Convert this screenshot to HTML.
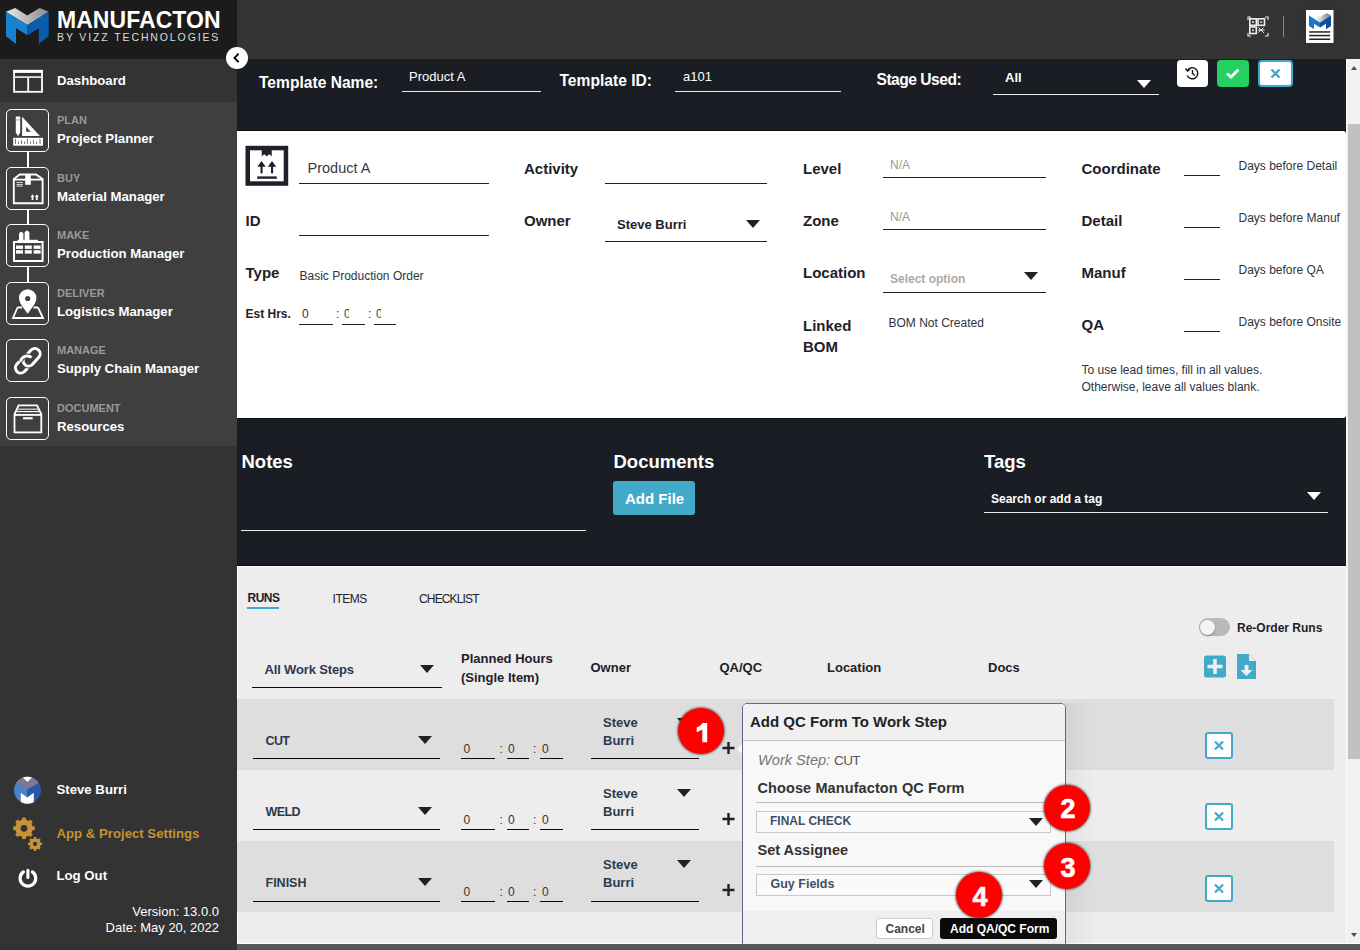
<!DOCTYPE html>
<html><head><meta charset="utf-8">
<style>
*{box-sizing:border-box;margin:0;padding:0}
html,body{width:1360px;height:950px;overflow:hidden;background:#ededed;font-family:"Liberation Sans",sans-serif}
.a{position:absolute}
.t{position:absolute;line-height:1;white-space:nowrap;top:calc(var(--b)*1px - 0.8465em)}
.b{font-weight:bold}
.ul{position:absolute;height:1px;background:#1e2129}
.tri{position:absolute;width:0;height:0;border-left:7px solid transparent;border-right:7px solid transparent;border-top:8px solid #1e2129}
</style></head><body>
<!-- backgrounds -->
<div class="a" style="left:0;top:0;width:237px;height:59px;background:#1b1b1b"></div>
<div class="a" style="left:237px;top:0;width:1123px;height:59px;background:#343434"></div>
<div class="a" style="left:0;top:59px;width:237px;height:43px;background:#333"></div>
<div class="a" style="left:0;top:102px;width:237px;height:344px;background:#3f3f3f"></div>
<div class="a" style="left:0;top:446px;width:237px;height:504px;background:#333"></div>
<div class="a" style="left:237px;top:59px;width:1109px;height:507px;background:#1b1d24"></div>
<div class="a" style="left:237px;top:130px;width:1109px;height:1px;background:#080b12"></div>
<div class="a" style="left:237px;top:418px;width:1109px;height:1px;background:#080b12"></div>
<div class="a" style="left:237px;top:565px;width:1109px;height:1px;background:#080b12"></div>
<div class="a" style="left:237px;top:131px;width:1109px;height:287px;background:#fff;border-radius:0 3px 3px 0"></div>
<div class="a" style="left:237px;top:566px;width:1109px;height:378px;background:#ededed;border-top:1px solid #fff;border-left:1px solid #fff;border-radius:0 3px 0 0"></div>
<!-- scrollbar -->
<div class="a" style="left:1346px;top:59px;width:14px;height:885px;background:#f1f1f1;border-left:1px solid #fafafa"></div>
<div class="a" style="left:1348px;top:124px;width:12px;height:635px;background:#c1c1c1"></div>
<div class="a" style="left:237px;top:943px;width:1123px;height:1px;background:#fff"></div>
<!-- SIDEBAR -->
<svg class="a" style="left:0;top:0" width="56" height="56" viewBox="0 0 56 56">
  <defs>
    <linearGradient id="lg1" x1="0" y1="0" x2="1" y2="0"><stop offset="0" stop-color="#e8e8e8"/><stop offset="1" stop-color="#8a8a8a"/></linearGradient>
  </defs>
  <polygon points="6,11.7 15.2,8 27.2,15.5 39.7,8 48.7,11.7 27.5,25" fill="url(#lg1)"/>
  <polygon points="6,11.7 27.5,25 27.5,35.3 16,28.2 16,44 6,36.2" fill="#1682d0"/>
  <polygon points="48.7,11.7 27.5,25 27.5,35.3 38.8,28.2 38.8,44 48.7,36.2" fill="#0a5cb0"/>
</svg>
<div class="t b" style="--b:28;left:57px;font-size:23px;color:#fff;letter-spacing:0.05px">MANUFACTON</div>
<div class="t" style="--b:41;left:57px;font-size:10.5px;color:#ddd;letter-spacing:1.88px">BY VIZZ TECHNOLOGIES</div>

<svg class="a" style="left:13px;top:69px" width="31" height="25" viewBox="0 0 31 25" fill="none" stroke="#fff" stroke-width="1.8">
  <rect x="1.1" y="1.8" width="27.9" height="21" />
  <rect x="0.2" y="0.9" width="29.7" height="3" fill="#fff" stroke="none"/>
  <rect x="1" y="7.2" width="28" height="1.8" fill="#e0e0e0" stroke="none"/>
  <line x1="15.2" y1="9" x2="15.2" y2="23"/>
</svg>
<div class="t b" style="--b:85;left:57px;font-size:13.2px;color:#fff">Dashboard</div>

<!-- nav boxes -->
<div class="a" style="left:6px;top:109px;width:43px;height:43px;border:1.6px solid #fff;border-radius:5px"></div>
<div class="a" style="left:6px;top:167px;width:43px;height:43px;border:1.6px solid #fff;border-radius:5px"></div>
<div class="a" style="left:6px;top:224px;width:43px;height:43px;border:1.6px solid #fff;border-radius:5px"></div>
<div class="a" style="left:6px;top:282px;width:43px;height:43px;border:1.6px solid #fff;border-radius:5px"></div>
<div class="a" style="left:6px;top:339px;width:43px;height:43px;border:1.6px solid #fff;border-radius:5px"></div>
<div class="a" style="left:6px;top:397px;width:43px;height:43px;border:1.6px solid #fff;border-radius:5px"></div>
<div class="a" style="left:27px;top:152px;width:1.6px;height:15px;background:#fff"></div>
<div class="a" style="left:27px;top:210px;width:1.6px;height:14px;background:#fff"></div>
<div class="a" style="left:27px;top:267px;width:1.6px;height:15px;background:#fff"></div>

<!-- plan icon -->
<svg class="a" style="left:6px;top:109px" width="43" height="43" viewBox="0 0 43 43">
  <path d="M9.8 7.5 h4.4 v16 l-2.2 3.7 l-2.2 -3.7z" fill="#fff"/>
  <rect x="9.8" y="9.8" width="4.4" height="1.9" fill="#c8c8c8"/>
  <path d="M16.1 7.7 L33.9 26.9 H16.1z" fill="#fff"/>
  <path d="M20.1 17.8 L24.8 22.7 H20.1z" fill="#3f3f3f"/>
  <rect x="7.2" y="28.8" width="29.8" height="7.9" fill="#fff"/>
  <g stroke="#555" stroke-width="0.8"><line x1="9.5" y1="29.8" x2="9.5" y2="35"/><line x1="12.5" y1="32.5" x2="12.5" y2="35"/><line x1="15.5" y1="31" x2="15.5" y2="35"/><line x1="18.5" y1="32.5" x2="18.5" y2="35"/><line x1="21.4" y1="29.8" x2="21.4" y2="35"/><line x1="24.5" y1="32.5" x2="24.5" y2="35"/><line x1="27.5" y1="31" x2="27.5" y2="35"/><line x1="30.5" y1="32.5" x2="30.5" y2="35"/><line x1="34" y1="29.8" x2="34" y2="35"/></g>
</svg>
<!-- buy icon -->
<svg class="a" style="left:6px;top:167px" width="43" height="43" viewBox="0 0 43 43" fill="none" stroke="#fff">
  <path d="M7.8 12.1 L13.8 7.5 H30.1 L36.6 12.1 V36.3 H7.8z" stroke-width="1.9"/>
  <line x1="7.8" y1="12.6" x2="36.6" y2="12.6" stroke-width="1.8"/>
  <rect x="19.2" y="7.5" width="5.6" height="10.3" fill="#fff" stroke="none"/>
  <g stroke-width="0.9" stroke="#e8e8e8"><line x1="10.4" y1="15.5" x2="16.9" y2="15.5"/><line x1="10.4" y1="17.4" x2="16.9" y2="17.4"/><line x1="10.4" y1="19.1" x2="16.9" y2="19.1"/></g>
  <path d="M26.5 33 v-3.6 M30.8 33 v-3.6" stroke-width="1.8"/>
  <path d="M24.6 30 L26.5 27.3 L28.4 30z M28.9 30 L30.8 27.3 L32.7 30z" fill="#fff" stroke="none"/>
</svg>
<!-- make icon -->
<svg class="a" style="left:6px;top:224px" width="43" height="43" viewBox="0 0 43 43">
  <path d="M13 17 V9.5 q2.2 -3.5 4.4 0 V17z M18.6 17 V8.5 q2.4 -3.8 4.8 0 V17z" fill="#fff"/>
  <rect x="11.5" y="15.8" width="20.5" height="2.2" fill="#fff"/>
  <rect x="8" y="18" width="28.6" height="19" fill="none" stroke="#fff" stroke-width="2"/>
  <g fill="#fff"><rect x="10" y="21.5" width="7" height="3.4"/><rect x="18.8" y="21.5" width="7" height="3.4"/><rect x="27.6" y="21.5" width="7" height="3.4"/><rect x="10" y="26.2" width="7" height="3.4"/><rect x="18.8" y="26.2" width="7" height="3.4"/><rect x="27.6" y="26.2" width="7" height="3.4"/></g>
</svg>
<!-- deliver icon -->
<svg class="a" style="left:6px;top:282px" width="43" height="43" viewBox="0 0 43 43">
  <path d="M21.7 31.8 C18 26 13 21.5 13 16 A8.7 8.7 0 0 1 30.4 16 C30.4 21.5 25.4 26 21.7 31.8z" fill="#fff"/>
  <circle cx="21.7" cy="16.5" r="2.6" fill="#3f3f3f"/>
  <path d="M11.5 25.5 h4.5 M27.5 25.5 h4.5 M11.5 25.5 L7 36 H37 L32 25.5" fill="none" stroke="#fff" stroke-width="1.8"/>
</svg>
<!-- manage icon -->
<svg class="a" style="left:6px;top:339px" width="43" height="43" viewBox="0 0 43 43" fill="none" stroke-linecap="round">
  <line x1="14.8" y1="28.8" x2="21" y2="21.8" stroke="#fff" stroke-width="13.6"/>
  <line x1="14.8" y1="28.8" x2="21" y2="21.8" stroke="#3f3f3f" stroke-width="7.6"/>
  <line x1="22.6" y1="21.8" x2="28.8" y2="14.8" stroke="#3f3f3f" stroke-width="15.5"/>
  <line x1="22.6" y1="21.8" x2="28.8" y2="14.8" stroke="#fff" stroke-width="13.6"/>
  <line x1="22.6" y1="21.8" x2="28.8" y2="14.8" stroke="#3f3f3f" stroke-width="7.6"/>
  <path d="M14.5 22.5 A6.8 6.8 0 0 1 25.5 18.5" stroke="#3f3f3f" stroke-width="5" stroke-linecap="butt"/>
  <path d="M14.5 22.5 A6.8 6.8 0 0 1 25.5 18.5" stroke="#fff" stroke-width="3" stroke-linecap="butt"/>
</svg>
<!-- document icon -->
<svg class="a" style="left:6px;top:397px" width="43" height="43" viewBox="0 0 43 43" fill="none" stroke="#fff">
  <path d="M8.4 17.5 L12.6 8.4 H31.1 L35.4 17.5" stroke-width="1.8"/>
  <rect x="8.5" y="17.9" width="26.8" height="17.5" stroke-width="1.8"/>
  <line x1="11.5" y1="12.2" x2="32.2" y2="12.2" stroke-width="1.2" stroke="#ddd"/>
  <line x1="10.5" y1="14.6" x2="33.2" y2="14.6" stroke-width="1.2"/>
  <rect x="17.1" y="20.2" width="9.6" height="2.1" fill="#fff" stroke="none"/>
</svg>

<div class="t b" style="--b:124;left:57px;font-size:11px;color:#999">PLAN</div>
<div class="t b" style="--b:143.6;left:57px;font-size:13.2px;color:#fff">Project Planner</div>
<div class="t b" style="--b:182;left:57px;font-size:11px;color:#999">BUY</div>
<div class="t b" style="--b:201.6;left:57px;font-size:13.2px;color:#fff">Material Manager</div>
<div class="t b" style="--b:239;left:57px;font-size:11px;color:#999">MAKE</div>
<div class="t b" style="--b:258.6;left:57px;font-size:13.2px;color:#fff">Production Manager</div>
<div class="t b" style="--b:297;left:57px;font-size:11px;color:#999">DELIVER</div>
<div class="t b" style="--b:316.6;left:57px;font-size:13.2px;color:#fff">Logistics Manager</div>
<div class="t b" style="--b:354;left:57px;font-size:11px;color:#999">MANAGE</div>
<div class="t b" style="--b:373.6;left:57px;font-size:13.2px;color:#fff">Supply Chain Manager</div>
<div class="t b" style="--b:412;left:57px;font-size:11px;color:#999">DOCUMENT</div>
<div class="t b" style="--b:431.6;left:57px;font-size:13.2px;color:#fff">Resources</div>

<!-- bottom -->
<svg class="a" style="left:13px;top:776px" width="29" height="29" viewBox="0 0 29 29">
  <defs><clipPath id="cc"><circle cx="14.5" cy="14.3" r="13.5"/></clipPath></defs>
  <g clip-path="url(#cc)">
    <rect x="0" y="0" width="14.5" height="29" fill="#4a80c6"/>
    <rect x="14.5" y="0" width="14.5" height="29" fill="#2a57a8"/>
    <polygon points="-2,4 8,-2 21,-2 31,4 14.3,13.3" fill="#7b7890"/>
    <polygon points="8.4,0 20.6,0 14.4,6" fill="#fff"/>
    <polygon points="7.8,16.8 14.2,21.6 20.8,16.8 20.8,30 7.8,30" fill="#fff"/>
  </g>
</svg>
<div class="t b" style="--b:794.6;left:56.5px;font-size:13.2px;color:#fff">Steve Burri</div>
<svg class="a" style="left:12px;top:816px" width="32" height="36" viewBox="0 0 32 36" fill="#c8923a" fill-rule="evenodd"><path d="M20.04 8.97 L20.46 10.27 L22.77 10.59 L22.77 14.01 L20.46 14.33 L20.04 15.63 L19.42 16.85 L20.82 18.71 L18.41 21.12 L16.55 19.72 L15.33 20.34 L14.03 20.76 L13.71 23.07 L10.29 23.07 L9.97 20.76 L8.67 20.34 L7.45 19.72 L5.59 21.12 L3.18 18.71 L4.58 16.85 L3.96 15.63 L3.54 14.33 L1.23 14.01 L1.23 10.59 L3.54 10.27 L3.96 8.97 L4.58 7.75 L3.18 5.89 L5.59 3.48 L7.45 4.88 L8.67 4.26 L9.97 3.84 L10.29 1.53 L13.71 1.53 L14.03 3.84 L15.33 4.26 L16.55 4.88 L18.41 3.48 L20.82 5.89 L19.42 7.75z M8.60 12.30 a3.40 3.40 0 1 0 6.80 0 a3.40 3.40 0 1 0 -6.80 0z"/><path d="M28.17 25.76 L28.45 26.59 L30.01 26.79 L30.01 29.01 L28.45 29.21 L28.17 30.04 L27.77 30.83 L28.74 32.07 L27.17 33.64 L25.93 32.67 L25.14 33.07 L24.31 33.35 L24.11 34.91 L21.89 34.91 L21.69 33.35 L20.86 33.07 L20.07 32.67 L18.83 33.64 L17.26 32.07 L18.23 30.83 L17.83 30.04 L17.55 29.21 L15.99 29.01 L15.99 26.79 L17.55 26.59 L17.83 25.76 L18.23 24.97 L17.26 23.73 L18.83 22.16 L20.07 23.13 L20.86 22.73 L21.69 22.45 L21.89 20.89 L24.11 20.89 L24.31 22.45 L25.14 22.73 L25.93 23.13 L27.17 22.16 L28.74 23.73 L27.77 24.97z M20.90 27.90 a2.10 2.10 0 1 0 4.20 0 a2.10 2.10 0 1 0 -4.20 0z"/></svg>
<div class="t b" style="--b:837.7;left:56.5px;font-size:13.2px;color:#c8902f">App &amp; Project Settings</div>
<svg class="a" style="left:17px;top:868px" width="22" height="22" viewBox="0 0 22 22" fill="none" stroke="#fff" stroke-width="3.2" stroke-linecap="round">
  <path d="M6.43 3.91 A7.8 7.8 0 1 0 15.37 3.91"/><line x1="10.9" y1="2.2" x2="10.9" y2="9.4" stroke-width="3"/>
</svg>
<div class="t b" style="--b:880.3;left:56.5px;font-size:13.2px;color:#fff">Log Out</div>
<div class="t" style="--b:916;right:1141px;font-size:13px;color:#fff">Version: 13.0.0</div>
<div class="t" style="--b:931.6;right:1141px;font-size:13px;color:#fff">Date: May 20, 2022</div>


<!-- TOP BAR -->
<svg class="a" style="left:1247px;top:16px" width="22" height="21" viewBox="0 0 22 21" fill="none" stroke="#eee" stroke-width="1.1">
  <path d="M1 4 V1 H4 M18 1 H21 V4 M21 17 V20 H18 M4 20 H1 V17"/>
  <rect x="2.8" y="2.8" width="6.5" height="6.5" stroke-width="1.6"/><rect x="11" y="2.8" width="6.5" height="6.5" stroke-width="1.6"/><rect x="2.8" y="11" width="6.5" height="6.5" stroke-width="1.6"/>
  <rect x="5" y="5" width="2" height="2" fill="#bbb" stroke="none"/><rect x="13.2" y="5" width="2" height="2" fill="#bbb" stroke="none"/><rect x="5" y="13.2" width="2" height="2" fill="#bbb" stroke="none"/>
  <path d="M11.5 11.5 l5.5 5.5 M16.5 11.5 l-5 5 M11 14 h6.5" stroke-width="1"/>
</svg>
<div class="a" style="left:1283px;top:16px;width:1px;height:21px;background:#888"></div>
<div class="a" style="left:1294px;top:0px;width:51px;height:51px;border-radius:50%;background:#323232"></div>
<svg class="a" style="left:1306px;top:10px" width="28" height="33" viewBox="0 0 28 33">
  <defs><linearGradient id="lg2" x1="0" y1="0" x2="1" y2="0"><stop offset="0.3" stop-color="#fff"/><stop offset="1" stop-color="#777"/></linearGradient></defs>
  <rect x="0" y="0" width="27.5" height="33" fill="#fff"/>
  <polygon points="3,5.5 14,12.5 25,5.5 20.5,3 14,7 7.5,3" fill="url(#lg2)"/>
  <polygon points="3,5.5 14,12.5 14,17.5 8,13.8 8,19.2 3,16" fill="#1a78c8"/>
  <polygon points="25,5.5 14,12.5 14,17.5 20,13.8 20,19.2 25,16" fill="#0b4f9e"/>
  <rect x="3.2" y="21.2" width="21" height="1.5" fill="#222"/><rect x="3.2" y="24.8" width="21" height="1.5" fill="#222"/><rect x="3.2" y="28.5" width="21" height="1.5" fill="#222"/>
</svg>

<!-- collapse btn -->
<div class="a" style="left:226px;top:47px;width:22px;height:22px;border-radius:50%;background:#fff"></div>
<svg class="a" style="left:231px;top:52px" width="12" height="12" viewBox="0 0 12 12"><path d="M7.6 1.6 L3.5 5.9 L7.6 10.1" fill="none" stroke="#000" stroke-width="1.9"/></svg>

<!-- HEADER -->
<div class="t b" style="--b:88;left:259px;font-size:15.6px;color:#fff">Template Name:</div>
<div class="t" style="--b:81;left:409px;font-size:13px;color:#fff">Product A</div>
<div class="ul" style="left:402px;top:91px;width:139px;background:#eee"></div>
<div class="t b" style="--b:86;left:559.5px;font-size:15.6px;color:#fff">Template ID:</div>
<div class="t" style="--b:81;left:683px;font-size:13px;color:#fff">a101</div>
<div class="ul" style="left:675px;top:91px;width:166px;background:#eee"></div>
<div class="t b" style="--b:85.6;left:876.5px;font-size:15.6px;letter-spacing:-0.5px;color:#fff">Stage Used:</div>
<div class="t b" style="--b:82;left:1005px;font-size:13px;color:#fff">All</div>
<div class="tri" style="left:1137px;top:80px;border-top-color:#fff"></div>
<div class="ul" style="left:993px;top:94px;width:166px;background:#eee"></div>
<div class="a" style="left:1177px;top:60px;width:31px;height:27px;background:#fff;border-radius:4px"></div>
<svg class="a" style="left:1184px;top:65px" width="17" height="17" viewBox="0 0 17 17" fill="none" stroke="#1b1d24" stroke-width="1.5">
  <path d="M3.5 5.5 A5.5 5.5 0 1 1 3.2 10.5"/><path d="M1.5 3.5 L3.5 6 L6 4.5" stroke-width="1.4"/><path d="M8.5 5 V8.5 L10.8 10.5"/>
</svg>
<div class="a" style="left:1217px;top:60px;width:32px;height:27px;background:#23d160;border-radius:4px"></div>
<svg class="a" style="left:1224px;top:66px" width="18" height="15" viewBox="0 0 18 15"><path d="M3 7.5 L7 11 L14.5 3.5" fill="none" stroke="#fff" stroke-width="2.8"/></svg>
<div class="a" style="left:1258px;top:60px;width:35px;height:27px;background:#fff;border:2px solid #3ea9cf;border-radius:4px"></div>
<svg class="a" style="left:1269px;top:67px" width="13" height="13" viewBox="0 0 13 13"><path d="M2.5 2.5 L10.5 10.5 M10.5 2.5 L2.5 10.5" stroke="#3ea9cf" stroke-width="2.4"/></svg>


<!-- WHITE CARD -->
<svg class="a" style="left:245px;top:145px" width="44" height="42" viewBox="0 0 44 42">
  <rect x="2.75" y="3.05" width="38.2" height="35.5" fill="none" stroke="#1e2129" stroke-width="4.5"/>
  <path d="M16.7 4 V11.2 L19.2 9.2 L21.7 11.2 L24.2 9.2 L26.7 11.2 V4z" fill="#1e2129"/>
  <path d="M12.3 21.8 L16.5 16 L20.7 21.8z M22.8 21.8 L27 16 L31.2 21.8z" fill="#1e2129"/>
  <rect x="15.5" y="21" width="2.1" height="7.3" fill="#1e2129"/><rect x="26" y="21" width="2.1" height="7.3" fill="#1e2129"/>
  <rect x="12.2" y="31.4" width="19.6" height="2.4" fill="#1e2129"/>
</svg>
<div class="t" style="--b:173;left:307.5px;font-size:14.5px;color:#333a45">Product A</div>
<div class="ul" style="left:299px;top:183px;width:190px;height:1px"></div>
<div class="t b" style="--b:226;left:245.5px;font-size:15px;color:#1e2129">ID</div>
<div class="ul" style="left:299px;top:235px;width:190px;height:1px"></div>
<div class="t b" style="--b:278;left:245.5px;font-size:15px;color:#1e2129">Type</div>
<div class="t" style="--b:280;left:299.5px;font-size:12px;color:#2c3440">Basic Production Order</div>
<div class="t b" style="--b:318;left:245.5px;font-size:12px;color:#1e2129">Est Hrs.</div>
<div class="t" style="--b:318.5;left:302px;font-size:12px;color:#333">0</div>
<div class="t" style="--b:318.5;left:344px;font-size:12px;color:#444;width:5px;overflow:hidden">0</div>
<div class="t" style="--b:318.5;left:376px;font-size:12px;color:#444;width:5px;overflow:hidden">0</div>
<div class="t" style="--b:318.5;left:336px;font-size:12px;color:#333">:</div>
<div class="t" style="--b:318.5;left:368px;font-size:12px;color:#333">:</div>
<div class="ul" style="left:299px;top:324px;width:34px;height:1px"></div>
<div class="ul" style="left:342px;top:324px;width:23px;height:1px"></div>
<div class="ul" style="left:374px;top:324px;width:22px;height:1px"></div>

<div class="t b" style="--b:173.6;left:524px;font-size:15px;color:#1e2129">Activity</div>
<div class="ul" style="left:605px;top:183px;width:162px;height:1px"></div>
<div class="t b" style="--b:225.7;left:524px;font-size:15px;color:#1e2129">Owner</div>
<div class="t b" style="--b:229;left:617px;font-size:13px;color:#1e2129">Steve Burri</div>
<div class="tri" style="left:746px;top:220px"></div>
<div class="ul" style="left:605px;top:241px;width:162px;height:1px"></div>

<div class="t b" style="--b:174;left:803px;font-size:15px;color:#1e2129">Level</div>
<div class="t" style="--b:169;left:890px;font-size:12px;color:#999">N/A</div>
<div class="ul" style="left:883px;top:177px;width:163px;height:1px"></div>
<div class="t b" style="--b:225.6;left:803px;font-size:15px;color:#1e2129">Zone</div>
<div class="t" style="--b:221;left:890px;font-size:12px;color:#999">N/A</div>
<div class="ul" style="left:883px;top:229px;width:163px;height:1px"></div>
<div class="t b" style="--b:277.5;left:803px;font-size:15px;color:#1e2129">Location</div>
<div class="t b" style="--b:283.5;left:890px;font-size:12px;color:#aaa">Select option</div>
<div class="tri" style="left:1024px;top:272px"></div>
<div class="ul" style="left:883px;top:292px;width:163px;height:1px"></div>
<div class="t b" style="--b:330.3;left:803px;font-size:15px;color:#1e2129">Linked</div>
<div class="t b" style="--b:351.6;left:803px;font-size:15px;color:#1e2129">BOM</div>
<div class="t" style="--b:327;left:888.5px;font-size:12px;color:#2c3440">BOM Not Created</div>

<div class="t b" style="--b:174;left:1081.5px;font-size:15px;color:#1e2129">Coordinate</div>
<div class="ul" style="left:1184px;top:175px;width:36px;height:1px"></div>
<div class="t" style="--b:170.5;left:1238.5px;font-size:12px;color:#2c3440">Days before Detail</div>
<div class="t b" style="--b:225.8;left:1081.5px;font-size:15px;color:#1e2129">Detail</div>
<div class="ul" style="left:1184px;top:227px;width:36px;height:1px"></div>
<div class="t" style="--b:222;left:1238.5px;font-size:12px;color:#2c3440">Days before Manuf</div>
<div class="t b" style="--b:277.9;left:1081.5px;font-size:15px;color:#1e2129">Manuf</div>
<div class="ul" style="left:1184px;top:279px;width:36px;height:1px"></div>
<div class="t" style="--b:274;left:1238.5px;font-size:12px;color:#2c3440">Days before QA</div>
<div class="t b" style="--b:330;left:1081.5px;font-size:15px;color:#1e2129">QA</div>
<div class="ul" style="left:1184px;top:331px;width:36px;height:1px"></div>
<div class="t" style="--b:326;left:1238.5px;font-size:12px;color:#2c3440">Days before Onsite</div>
<div class="t" style="--b:374;left:1081.5px;font-size:12px;color:#2c3440">To use lead times, fill in all values.</div>
<div class="t" style="--b:391;left:1081.5px;font-size:12px;color:#2c3440">Otherwise, leave all values blank.</div>


<!-- DARK SECTION -->
<div class="t b" style="--b:469;left:241.5px;font-size:18.5px;color:#fff">Notes</div>
<div class="ul" style="left:241px;top:530px;width:345px;background:#eee"></div>
<div class="t b" style="--b:469;left:613.5px;font-size:18.5px;color:#fff">Documents</div>
<div class="a" style="left:613px;top:481px;width:82px;height:34px;background:#43a9c9;border-radius:3px"></div>
<div class="t b" style="--b:504;left:625px;font-size:15px;color:#fff">Add File</div>
<div class="t b" style="--b:469;left:984px;font-size:18.5px;color:#fff">Tags</div>
<div class="t b" style="--b:503;left:991px;font-size:12px;color:#fff">Search or add a tag</div>
<div class="tri" style="left:1307px;top:492px;border-top-color:#fff"></div>
<div class="ul" style="left:984px;top:512px;width:344px;background:#eee"></div>

<!-- RUNS -->
<div class="t b" style="--b:602.4;left:247.5px;font-size:12px;letter-spacing:-0.5px;color:#1e2129">RUNS</div>
<div class="a" style="left:247px;top:607px;width:32px;height:2px;background:#3ea9cf"></div>
<div class="t" style="--b:603;left:332.5px;font-size:12px;letter-spacing:-0.45px;color:#1e2129">ITEMS</div>
<div class="t" style="--b:603;left:419px;font-size:12px;letter-spacing:-0.85px;color:#1e2129">CHECKLIST</div>
<div class="a" style="left:1199px;top:618px;width:31px;height:18px;border-radius:9px;background:#b9b9b9"></div>
<div class="a" style="left:1200px;top:620px;width:15px;height:15px;border-radius:50%;background:#f5f5f5;box-shadow:0 1px 2px rgba(0,0,0,0.35)"></div>
<div class="t b" style="--b:632;left:1237px;font-size:12px;color:#1e2129">Re-Order Runs</div>

<div class="t b" style="--b:674;left:264.5px;font-size:13px;letter-spacing:-0.15px;color:#2c3a4f">All Work Steps</div>
<div class="tri" style="left:420px;top:665px"></div>
<div class="ul" style="left:252px;top:687px;width:190px;background:#0a0a0a"></div>
<div class="t b" style="--b:663;left:461px;font-size:13px;color:#1e2129">Planned Hours</div>
<div class="t b" style="--b:682.4;left:461px;font-size:13px;color:#1e2129">(Single Item)</div>
<div class="t b" style="--b:672.2;left:590.5px;font-size:13px;color:#1e2129">Owner</div>
<div class="t b" style="--b:672.2;left:719.5px;font-size:13px;color:#1e2129">QA/QC</div>
<div class="t b" style="--b:672;left:827px;font-size:13px;color:#1e2129">Location</div>
<div class="t b" style="--b:672;left:988px;font-size:13px;color:#1e2129">Docs</div>
<svg class="a" style="left:1204px;top:655px" width="23" height="23" viewBox="0 0 23 23">
  <rect x="0" y="0.5" width="22" height="22" rx="2.5" fill="#43a9c9"/>
  <path d="M11 4 V19 M3.5 11.5 H18.5" stroke="#eee" stroke-width="3.6"/>
</svg>
<svg class="a" style="left:1237px;top:654px" width="20" height="26" viewBox="0 0 20 26">
  <path d="M0 0 H12 L19 7 V25 H0z" fill="#43a9c9"/>
  <path d="M12 0 V7 H19z" fill="#eee"/>
  <path d="M7.6 11 H11.4 V16 H15.5 L9.5 22 L3.5 16 H7.6z" fill="#eee"/>
</svg>
<div class="a" style="left:237px;top:699px;width:1097px;height:71px;background:#dedede"></div>
<div class="a" style="left:237px;top:770px;width:1097px;height:71px;background:#ededed"></div>
<div class="a" style="left:237px;top:841px;width:1097px;height:71px;background:#dedede"></div>
<div class="t b" style="--b:745.2;left:265.5px;font-size:12.5px;letter-spacing:-0.6px;color:#2c3a4f">CUT</div>
<div class="tri" style="left:418px;top:736px"></div>
<div class="ul" style="left:253px;top:758px;width:187px;background:#0a0a0a"></div>
<div class="t" style="--b:753.3;left:463.5px;font-size:12px;color:#333">0</div>
<div class="t" style="--b:753.3;left:508px;font-size:12px;color:#333">0</div>
<div class="t" style="--b:753.3;left:542px;font-size:12px;color:#333">0</div>
<div class="t" style="--b:753.3;left:499.5px;font-size:12px;color:#333">:</div>
<div class="t" style="--b:753.3;left:533px;font-size:12px;color:#333">:</div>
<div class="ul" style="left:461px;top:758px;width:34px;background:#0a0a0a"></div>
<div class="ul" style="left:507px;top:758px;width:22px;background:#0a0a0a"></div>
<div class="ul" style="left:540px;top:758px;width:23px;background:#0a0a0a"></div>
<div class="t b" style="--b:726.7;left:603px;font-size:13px;color:#2c3a4f">Steve</div>
<div class="t b" style="--b:744.8;left:603px;font-size:13px;color:#2c3a4f">Burri</div>
<div class="tri" style="left:677px;top:718px"></div>
<div class="ul" style="left:591px;top:758px;width:108px;background:#0a0a0a"></div>
<svg class="a" style="left:722px;top:742px" width="13" height="13" viewBox="0 0 13 13"><path d="M6.5 0 V12 M0.5 6 H12.5" stroke="#1e2129" stroke-width="2.4"/></svg>
<div class="a" style="left:1205px;top:732px;width:28px;height:27px;background:#fff;border:2px solid #43a9c9;border-radius:3px"></div>
<svg class="a" style="left:1213px;top:739px" width="12" height="13" viewBox="0 0 12 13"><path d="M2 2.5 L10 10.5 M10 2.5 L2 10.5" stroke="#43a9c9" stroke-width="2.3"/></svg>
<div class="t b" style="--b:816.2;left:265.5px;font-size:12.5px;letter-spacing:-0.6px;color:#2c3a4f">WELD</div>
<div class="tri" style="left:418px;top:807px"></div>
<div class="ul" style="left:253px;top:829px;width:187px;background:#0a0a0a"></div>
<div class="t" style="--b:824.3;left:463.5px;font-size:12px;color:#333">0</div>
<div class="t" style="--b:824.3;left:508px;font-size:12px;color:#333">0</div>
<div class="t" style="--b:824.3;left:542px;font-size:12px;color:#333">0</div>
<div class="t" style="--b:824.3;left:499.5px;font-size:12px;color:#333">:</div>
<div class="t" style="--b:824.3;left:533px;font-size:12px;color:#333">:</div>
<div class="ul" style="left:461px;top:829px;width:34px;background:#0a0a0a"></div>
<div class="ul" style="left:507px;top:829px;width:22px;background:#0a0a0a"></div>
<div class="ul" style="left:540px;top:829px;width:23px;background:#0a0a0a"></div>
<div class="t b" style="--b:797.7;left:603px;font-size:13px;color:#2c3a4f">Steve</div>
<div class="t b" style="--b:815.8;left:603px;font-size:13px;color:#2c3a4f">Burri</div>
<div class="tri" style="left:677px;top:789px"></div>
<div class="ul" style="left:591px;top:829px;width:108px;background:#0a0a0a"></div>
<svg class="a" style="left:722px;top:813px" width="13" height="13" viewBox="0 0 13 13"><path d="M6.5 0 V12 M0.5 6 H12.5" stroke="#1e2129" stroke-width="2.4"/></svg>
<div class="a" style="left:1205px;top:803px;width:28px;height:27px;background:#fff;border:2px solid #43a9c9;border-radius:3px"></div>
<svg class="a" style="left:1213px;top:810px" width="12" height="13" viewBox="0 0 12 13"><path d="M2 2.5 L10 10.5 M10 2.5 L2 10.5" stroke="#43a9c9" stroke-width="2.3"/></svg>
<div class="t b" style="--b:887.2;left:265.5px;font-size:12.5px;color:#2c3a4f">FINISH</div>
<div class="tri" style="left:418px;top:878px"></div>
<div class="ul" style="left:253px;top:901px;width:187px;background:#0a0a0a"></div>
<div class="t" style="--b:896.3;left:463.5px;font-size:12px;color:#333">0</div>
<div class="t" style="--b:896.3;left:508px;font-size:12px;color:#333">0</div>
<div class="t" style="--b:896.3;left:542px;font-size:12px;color:#333">0</div>
<div class="t" style="--b:896.3;left:499.5px;font-size:12px;color:#333">:</div>
<div class="t" style="--b:896.3;left:533px;font-size:12px;color:#333">:</div>
<div class="ul" style="left:461px;top:901px;width:34px;background:#0a0a0a"></div>
<div class="ul" style="left:507px;top:901px;width:22px;background:#0a0a0a"></div>
<div class="ul" style="left:540px;top:901px;width:23px;background:#0a0a0a"></div>
<div class="t b" style="--b:868.7;left:603px;font-size:13px;color:#2c3a4f">Steve</div>
<div class="t b" style="--b:886.8;left:603px;font-size:13px;color:#2c3a4f">Burri</div>
<div class="tri" style="left:677px;top:860px"></div>
<div class="ul" style="left:591px;top:901px;width:108px;background:#0a0a0a"></div>
<svg class="a" style="left:722px;top:884px" width="13" height="13" viewBox="0 0 13 13"><path d="M6.5 0 V12 M0.5 6 H12.5" stroke="#1e2129" stroke-width="2.4"/></svg>
<div class="a" style="left:1205px;top:875px;width:28px;height:27px;background:#fff;border:2px solid #43a9c9;border-radius:3px"></div>
<svg class="a" style="left:1213px;top:882px" width="12" height="13" viewBox="0 0 12 13"><path d="M2 2.5 L10 10.5 M10 2.5 L2 10.5" stroke="#43a9c9" stroke-width="2.3"/></svg>

<!-- POPUP -->
<div class="a" style="left:1065px;top:703px;width:30px;height:241px;background:linear-gradient(to right,rgba(0,0,0,0.05),rgba(0,0,0,0))"></div>
<div class="a" style="left:742px;top:703px;width:324px;height:250px;background:#f8f8f8;border:1.8px solid #62658f;border-radius:5px;overflow:hidden">
  <div class="a" style="left:0;top:0;width:100%;height:37px;background:#f0f0f0;border-bottom:1px solid #c8c8c8"></div>
  <div class="a" style="left:0;top:207px;width:100%;height:50px;background:#efefef"></div>
</div>
<div class="a" style="left:737px;top:744px;width:0;height:0;border-top:5px solid transparent;border-bottom:5px solid transparent;border-right:5px solid #f8f8f8"></div>
<div class="t b" style="--b:726.7;left:750px;font-size:15px;color:#222">Add QC Form To Work Step</div>
<div class="t" style="--b:765;left:758px;font-size:14.6px;color:#777;font-style:italic">Work Step:</div>
<div class="t" style="--b:765;left:834px;font-size:13.5px;letter-spacing:-0.6px;color:#555">CUT</div>
<div class="t b" style="--b:793.4;left:757.5px;font-size:14.5px;letter-spacing:0.1px;color:#333">Choose Manufacton QC Form</div>
<div class="a" style="left:756px;top:802px;width:294px;height:1px;background:#bbb"></div>
<div class="a" style="left:756px;top:811px;width:295px;height:22px;background:#fafafa;border:1px solid #c8c8c8"></div>
<div class="t b" style="--b:825;left:770px;font-size:12px;color:#3d5068">FINAL CHECK</div>
<div class="tri" style="left:1029px;top:818px"></div>
<div class="t b" style="--b:855.5;left:757.5px;font-size:14.5px;color:#333">Set Assignee</div>
<div class="a" style="left:756px;top:866px;width:294px;height:1px;background:#bbb"></div>
<div class="a" style="left:756px;top:874px;width:295px;height:22px;background:#fafafa;border:1px solid #c8c8c8"></div>
<div class="t b" style="--b:888.2;left:770.5px;font-size:12.5px;color:#3d5068">Guy Fields</div>
<div class="tri" style="left:1029px;top:880px"></div>
<div class="a" style="left:876px;top:918px;width:57px;height:21px;background:#fff;border:1px solid #ccc;border-radius:3px"></div>
<div class="t b" style="--b:933.2;left:885.5px;font-size:12px;color:#444">Cancel</div>
<div class="a" style="left:940px;top:918px;width:117px;height:21px;background:#0a0a0a;border-radius:3px"></div>
<div class="t b" style="--b:933.2;left:950px;font-size:12px;color:#fff">Add QA/QC Form</div>

<!-- BADGES -->
<div class="a" style="left:678px;top:708px;width:46px;height:46px;border-radius:50%;background:#f00;box-shadow:0 0 2px 1px rgba(40,50,50,0.6)"></div>
<svg class="a" style="left:690px;top:720px" width="22" height="25" viewBox="0 0 22 25"><path d="M6.7 7.6 Q10.5 6 12.6 3 H17.2 V22.2 H12.3 V9.6 Q9.6 11.4 6.7 12.2z" fill="#fff"/></svg>
<div class="a" style="left:1044px;top:785px;width:46px;height:46px;border-radius:50%;background:#f00;box-shadow:0 0 2px 1px rgba(40,50,50,0.6)"></div>
<div class="t b" style="--b:819.2;left:1057px;width:22px;text-align:center;font-size:27px;color:#fff;-webkit-text-stroke:0.6px #fff">2</div>
<div class="a" style="left:1044px;top:843px;width:46px;height:46px;border-radius:50%;background:#f00;box-shadow:0 0 2px 1px rgba(40,50,50,0.6)"></div>
<div class="t b" style="--b:877.5;left:1057px;width:22px;text-align:center;font-size:27px;color:#fff;-webkit-text-stroke:0.6px #fff">3</div>
<div class="a" style="left:956px;top:872px;width:46px;height:46px;border-radius:50%;background:#f00;box-shadow:0 0 2px 1px rgba(40,50,50,0.6)"></div>
<div class="t b" style="--b:906.5;left:969px;width:22px;text-align:center;font-size:27px;color:#fff;-webkit-text-stroke:0.6px #fff">4</div>


<div class="a" style="left:237px;top:944px;width:1123px;height:6px;background:#575757"></div>
<div class="a" style="left:1351px;top:66px;width:0;height:0;border-left:3.5px solid transparent;border-right:3.5px solid transparent;border-bottom:4px solid #505050"></div>
<div class="a" style="left:1351px;top:933px;width:0;height:0;border-left:3.5px solid transparent;border-right:3.5px solid transparent;border-top:4px solid #505050"></div>
</body></html>
